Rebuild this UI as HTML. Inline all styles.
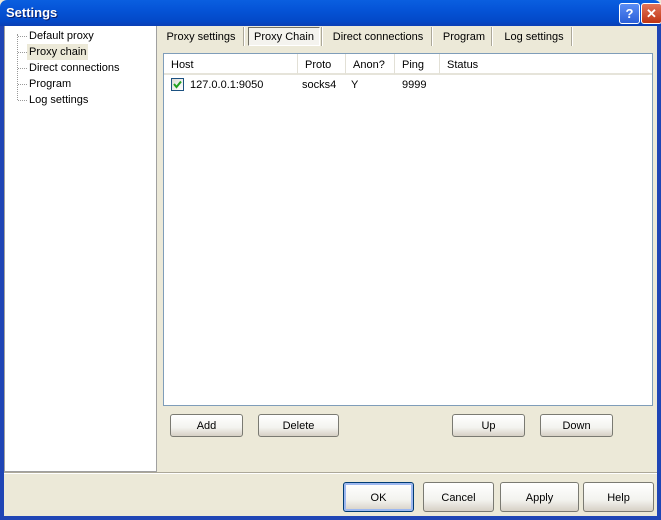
<!DOCTYPE html>
<html><head><style>
*{margin:0;padding:0;box-sizing:border-box}
body{width:661px;height:520px;overflow:hidden;font-family:Tahoma,"Liberation Sans",sans-serif;font-size:11px;color:#000;position:relative;background:#ECE9D8}
.a{position:absolute}
.title{left:0;top:0;width:661px;height:26px;background:linear-gradient(#0A5FE0,#0553D6 40%,#0349C8 80%,#0A3FB5);border-radius:7px 7px 0 0}
.title span{position:absolute;left:6px;top:5px;color:#fff;font-weight:bold;font-size:13px;text-shadow:1px 1px #0a1e6a}
.bl{left:0;top:26px;width:4px;height:494px;background:#1F45B5}
.br{right:0;top:26px;width:4px;height:494px;background:#1F45B5}
.bb{left:0;bottom:0;width:661px;height:4px;background:#1F45B5}
.tb{width:21px;height:21px;top:3px;border:1px solid #fff;border-radius:3px;color:#fff;font-weight:bold;text-align:center;line-height:19px;font-size:13px}
.tree{left:4px;top:26px;width:153px;height:446px;background:#fff;border:1px solid #A0A0A0;border-top:none}
.ti{position:absolute;left:22px;height:16px;line-height:17px;padding:0 2px;font-size:11px}
.dots{position:absolute;left:12px;width:1px;border-left:1px dotted #999}
.hd{position:absolute;left:13px;width:9px;border-top:1px dotted #999}
.tab{top:27px;height:19px;line-height:20px;font-size:11px;text-align:center}
.sep{top:27px;width:2px;height:19px;border-left:1px solid #ACA899;border-right:1px solid #fff}
.list{left:163px;top:53px;width:490px;height:353px;background:#fff;border:1px solid #7F9DB9}
.hdr{position:absolute;top:0;height:21px;line-height:23px;padding-left:7px;border-right:1px solid #E2E0D6;border-bottom:2px solid #E6E4DA}
.btn{height:23px;border:1px solid #7A7A72;border-radius:3px;background:linear-gradient(#fff,#F3F3EF 60%,#D6D0C5);text-align:center;line-height:23px;font-size:11px}
</style></head><body>
<div class="a title"><span>Settings</span>
<div class="a tb" style="left:619px;background:linear-gradient(#5B8DF5,#2A5FD8)">?</div>
<div class="a tb" style="left:641px;background:linear-gradient(#E2745B,#C03412)">✕</div>
</div>
<div class="a bl"></div><div class="a br"></div><div class="a bb"></div>
<div class="a tree">
<div class="dots" style="top:8px;height:66px"></div>
<div class="hd" style="top:10px"></div><div class="hd" style="top:26px"></div><div class="hd" style="top:42px"></div><div class="hd" style="top:58px"></div><div class="hd" style="top:74px"></div>
<div class="ti" style="top:2px">Default proxy</div>
<div class="ti" style="top:18px;background:#ECE9D8">Proxy chain</div>
<div class="ti" style="top:34px">Direct connections</div>
<div class="ti" style="top:50px">Program</div>
<div class="ti" style="top:66px">Log settings</div>
</div>
<div class="a" style="left:4px;top:472px;width:653px;height:1px;background:#ACA899"></div>
<div class="a" style="left:4px;top:473px;width:653px;height:1px;background:#fff"></div>
<div class="a tab" style="left:160px;width:82px">Proxy settings</div>
<div class="a sep" style="left:243px"></div>
<div class="a tab" style="left:248px;width:72px;border:1px solid;border-color:#716F64 #fff #fff #716F64;background:#F4F3EE;line-height:19px">Proxy Chain</div>
<div class="a sep" style="left:321px"></div>
<div class="a tab" style="left:326px;width:104px">Direct connections</div>
<div class="a sep" style="left:431px"></div>
<div class="a tab" style="left:437px;width:54px">Program</div>
<div class="a sep" style="left:491px"></div>
<div class="a tab" style="left:497px;width:74px">Log settings</div>
<div class="a sep" style="left:571px"></div>
<div class="a list">
<div class="hdr" style="left:0;width:134px">Host</div>
<div class="hdr" style="left:134px;width:48px">Proto</div>
<div class="hdr" style="left:182px;width:49px">Anon?</div>
<div class="hdr" style="left:231px;width:45px">Ping</div>
<div class="hdr" style="left:276px;width:212px;border-right:none">Status</div>
<div class="a" style="left:7px;top:24px;width:13px;height:13px;border:1px solid #1C5180;background:linear-gradient(135deg,#DCDCD7,#fff)"><svg width="11" height="11" style="position:absolute;left:0;top:0"><path d="M2 5 L4.5 8 L9 2.5" stroke="#21A121" stroke-width="2" fill="none"/></svg></div>
<div class="a" style="left:26px;top:25px">127.0.0.1:9050</div>
<div class="a" style="left:138px;top:25px">socks4</div>
<div class="a" style="left:187px;top:25px">Y</div>
<div class="a" style="left:238px;top:25px">9999</div>
</div>
<div class="a btn" style="left:170px;top:414px;width:73px">Add</div>
<div class="a btn" style="left:258px;top:414px;width:81px">Delete</div>
<div class="a btn" style="left:452px;top:414px;width:73px">Up</div>
<div class="a btn" style="left:540px;top:414px;width:73px">Down</div>
<div class="a btn" style="left:343px;top:482px;width:71px;height:30px;line-height:30px;border-color:#003C74;box-shadow:inset 0 0 0 2px #9DB8F0">OK</div>
<div class="a btn" style="left:423px;top:482px;width:71px;height:30px;line-height:30px">Cancel</div>
<div class="a btn" style="left:500px;top:482px;width:79px;height:30px;line-height:30px">Apply</div>
<div class="a btn" style="left:583px;top:482px;width:71px;height:30px;line-height:30px">Help</div>
</body></html>
